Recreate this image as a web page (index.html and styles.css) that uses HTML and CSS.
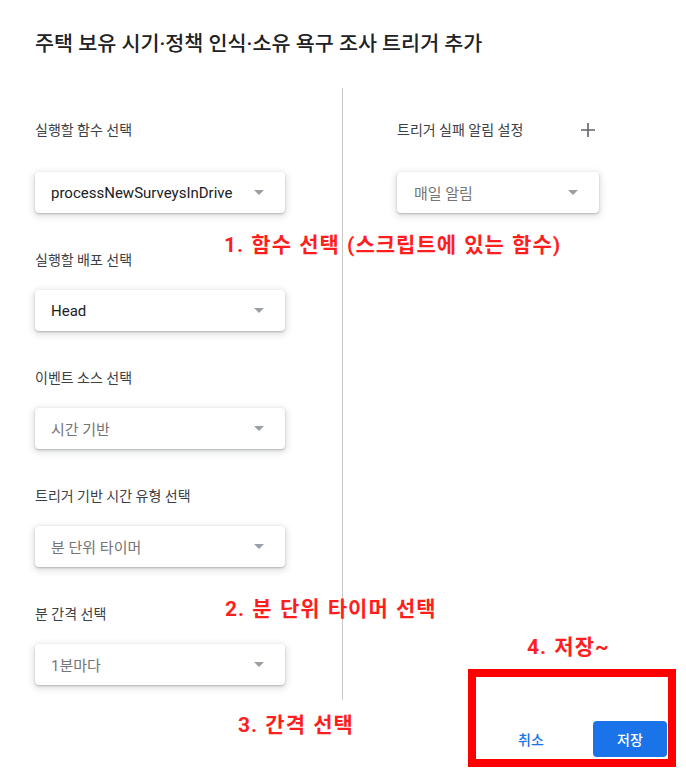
FILE: index.html
```html
<!DOCTYPE html>
<html lang="ko">

<head>
    <meta charset="UTF-8">
    <meta name="viewport" content="width=device-width, initial-scale=1.0">
    <title>트리거 추가</title>
    <link rel="stylesheet" href="styles.css">
</head>

<body>

    <div class="dialog">
        <h1 class="title">주택 보유 시기·정책 인식·소유 욕구 조사 트리거 추가</h1>

        <div class="body">
            <!-- 왼쪽: 트리거 설정 -->
            <div class="col col-left">
                <div class="field field-first">
                    <div class="field-head"><span class="label">실행할 함수 선택</span></div>
                    <div class="select"><span class="value">processNewSurveysInDrive</span><span class="arrow"></span></div>
                </div>
                <div class="field">
                    <div class="label">실행할 배포 선택</div>
                    <div class="select"><span class="value">Head</span><span class="arrow"></span></div>
                </div>
                <div class="field">
                    <div class="label">이벤트 소스 선택</div>
                    <div class="select"><span class="value value-muted">시간 기반</span><span class="arrow"></span></div>
                </div>
                <div class="field">
                    <div class="label">트리거 기반 시간 유형 선택</div>
                    <div class="select"><span class="value value-muted">분 단위 타이머</span><span class="arrow"></span></div>
                </div>
                <div class="field">
                    <div class="label">분 간격 선택</div>
                    <div class="select"><span class="value value-muted">1분마다</span><span class="arrow"></span></div>
                </div>
            </div>

            <!-- 오른쪽: 실패 알림 -->
            <div class="col col-right">
                <div class="field field-first">
                    <div class="field-head">
                        <span class="label">트리거 실패 알림 설정</span>
                        <span class="plus">
                            <svg width="16" height="16" viewBox="0 0 16 16">
                                <path d="M8 1v14M1 8h14" stroke="#5f6368" stroke-width="1.6" fill="none" />
                            </svg>
                        </span>
                    </div>
                    <div class="select select-narrow"><span class="value value-muted">매일 알림</span><span class="arrow"></span></div>
                </div>
            </div>
        </div>

        <div class="actions">
            <button class="btn btn-text">취소</button>
            <button class="btn btn-primary">저장</button>
        </div>

        <!-- 설명용 주석 -->
        <p class="note note-1">1. 함수 선택 (스크립트에 있는 함수)</p>
        <p class="note note-2">2. 분 단위 타이머 선택</p>
        <p class="note note-3">3. 간격 선택</p>
        <p class="note note-4">4. 저장~</p>
        <div class="mark"></div>
    </div>

</body>

</html>
```

FILE: styles.css
```css
* {
    margin: 0;
    padding: 0;
    box-sizing: border-box;
}

body {
    background-color: #fff;
    font-family: Roboto, "Noto Sans CJK KR", sans-serif;
    color: #202124;
}

.dialog {
    position: relative;
    width: 686px;
    height: 773px;
}

.title {
    padding: 30px 35px 0;
    font-size: 20.7px;
    line-height: 28px;
    font-weight: 500;
    color: #202124;
}

.body {
    display: flex;
    margin-top: 30px;
}

.col-left {
    width: 343px;
    padding: 22px 0 15px 35px;
    border-right: 1px solid #c8c8c8;
}

.col-right {
    padding: 22px 0 0 54px;
}

.field {
    margin-top: 37px;
}

.field-first {
    margin-top: 0;
}

.field-head {
    height: 40px;
    margin-bottom: 22px;
    display: flex;
    align-items: center;
    justify-content: space-between;
}

.label {
    font-size: 14px;
    line-height: 20px;
    color: #3c4043;
}

.field .label {
    margin-bottom: 20px;
}

.field-head .label {
    margin-bottom: 0;
}

.plus {
    width: 22px;
    display: flex;
    justify-content: center;
}

.select {
    width: 250px;
    height: 41px;
    padding: 0 21px 0 16px;
    display: flex;
    align-items: center;
    justify-content: space-between;
    border-radius: 4px;
    background-color: #fff;
    box-shadow: 0 1px 2px 0 rgba(60, 64, 67, .3), 0 2px 6px 2px rgba(60, 64, 67, .15);
}

.select-narrow {
    width: 202px;
    padding-left: 17px;
}

.value {
    font-size: 15px;
    color: #202124;
}

.value-muted {
    color: #757575;
}

.arrow {
    width: 0;
    height: 0;
    border-left: 5px solid transparent;
    border-right: 5px solid transparent;
    border-top: 5px solid #9aa0a6;
}

.actions {
    display: flex;
    justify-content: flex-end;
    gap: 24px;
    margin-top: 21px;
    padding-right: 19px;
}

.btn {
    height: 36px;
    border: 0;
    border-radius: 4px;
    font-family: Roboto, "Noto Sans CJK KR", sans-serif;
    font-size: 14px;
    font-weight: 500;
    cursor: pointer;
}

.btn-text {
    width: 76px;
    background-color: transparent;
    color: #1a73e8;
}

.btn-primary {
    width: 74px;
    background-color: #1a73e8;
    color: #fff;
}

/* 빨간 주석 */
.note {
    position: absolute;
    font-size: 21px;
    line-height: 24px;
    font-weight: 700;
    letter-spacing: 1px;
    word-spacing: 1px;
    color: #ff1e1e;
    white-space: nowrap;
}

.note-1 {
    left: 224px;
    top: 233px;
}

.note-2 {
    left: 225px;
    top: 597px;
}

.note-3 {
    left: 238px;
    top: 713px;
}

.note-4 {
    left: 527px;
    top: 635px;
}

.mark {
    position: absolute;
    left: 468px;
    top: 669px;
    width: 208px;
    height: 98px;
    border: 8px solid #ff0000;
}
```
